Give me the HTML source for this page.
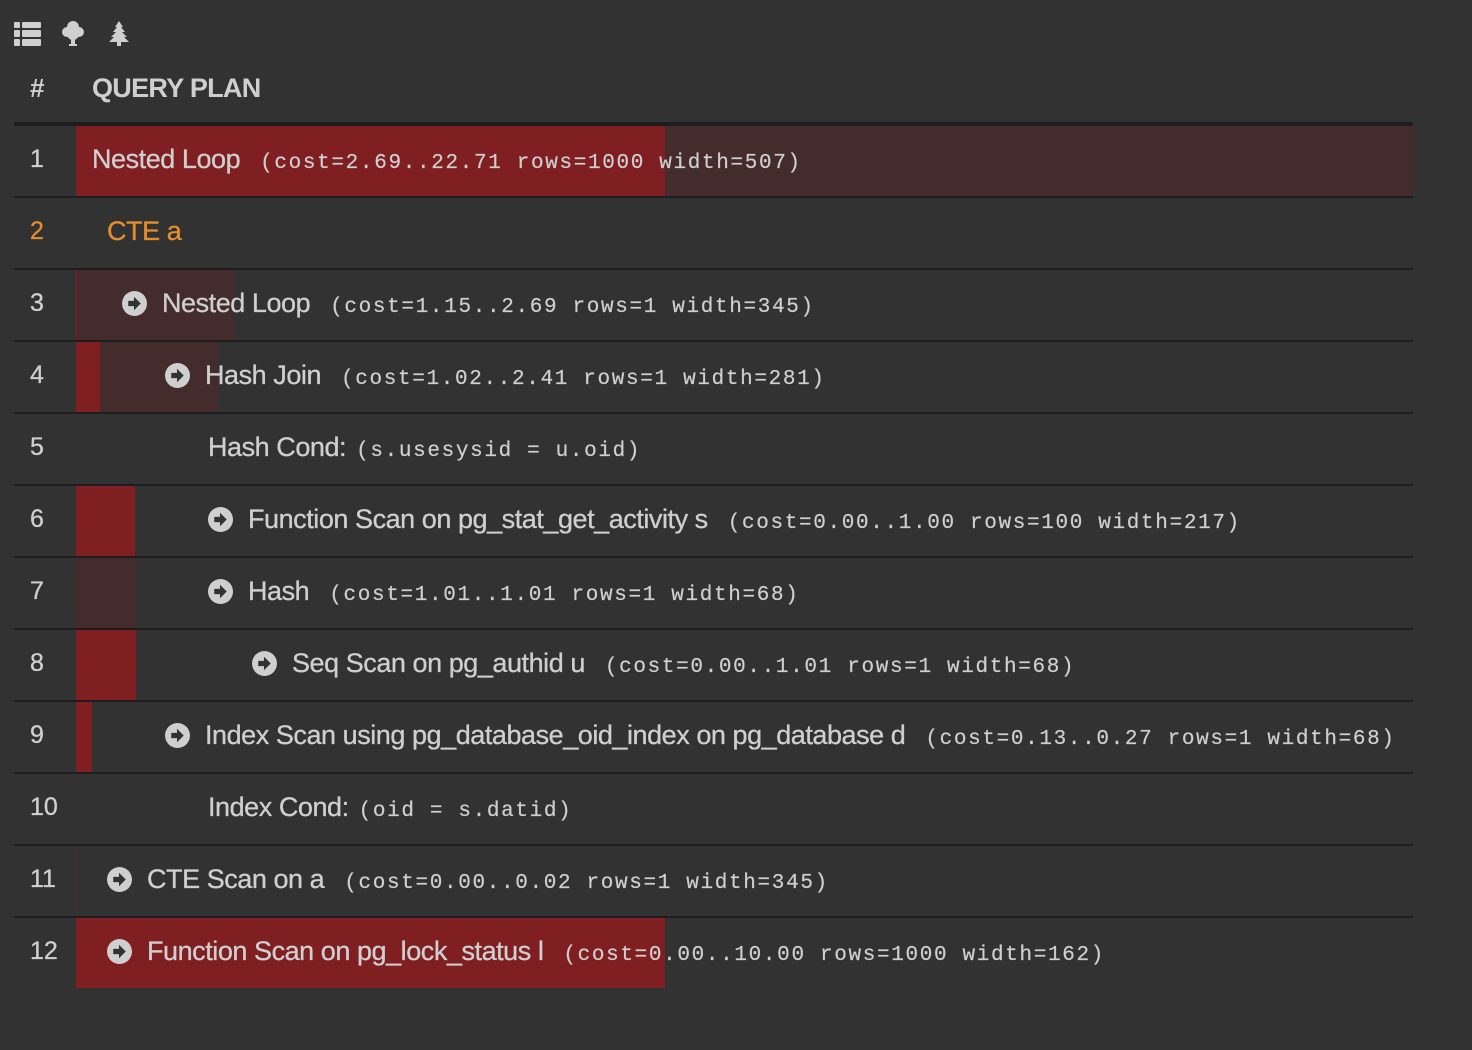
<!DOCTYPE html>
<html><head><meta charset="utf-8"><style>
*{margin:0;padding:0;box-sizing:border-box}
body{width:1472px;height:1050px;background:#323232;position:relative;overflow:hidden;font-family:"Liberation Sans",Arial,sans-serif;color:#cfcfcf}
.a{position:absolute}
.sep{position:absolute;left:14px;width:1399px;height:2px;background:#1e1e20}
.bar{position:absolute;height:70px}
.r{background:#7f1f22}
.b{background:#442b2c}
.num{position:absolute;left:30px;font-size:25px;line-height:70px;-webkit-text-stroke:0.3px #cfcfcf}
.ln{position:absolute;height:70px;display:flex;align-items:center;white-space:nowrap}
.in{display:flex;align-items:baseline}
.nm{font-size:27px;letter-spacing:-0.45px;-webkit-text-stroke:0.3px currentColor}
.mono{font-family:"Liberation Mono",monospace;font-size:21px;letter-spacing:1.65px;margin-left:20px;-webkit-text-stroke:0.2px #cfcfcf}
.ic{width:25px;height:25px;margin-right:15px;flex:none}
</style></head><body>
<svg class="a" style="left:14px;top:22px" width="27" height="24" viewBox="0 0 27 24" fill="#cfcfcf"><rect x="0" y="0" width="6" height="6" rx="1"/><rect x="8" y="0" width="19" height="6" rx="1"/><rect x="0" y="8" width="6" height="7" rx="1"/><rect x="8" y="8" width="19" height="7" rx="1"/><rect x="0" y="17" width="6" height="7" rx="1"/><rect x="8" y="17" width="19" height="7" rx="1"/></svg>
<svg class="a" style="left:62px;top:21px" width="22" height="26" viewBox="0 0 22 26" fill="#cfcfcf"><circle cx="11" cy="6" r="6"/><circle cx="5" cy="11" r="5"/><circle cx="17" cy="11" r="5"/><circle cx="11" cy="13" r="6"/><rect x="9" y="14" width="4" height="11"/><rect x="7" y="23" width="8" height="2"/></svg>
<svg class="a" style="left:108px;top:21px" width="22" height="26" viewBox="0 0 22 26" fill="#cfcfcf"><path d="M11 0L15 6H13L17 11H14L19 16H16L21 21H1L6 16H3L8 11H5L9 6H7Z"/><rect x="9" y="20" width="4" height="5"/></svg>
<div class="a" style="left:30px;top:73px;font-size:26px;font-weight:bold">#</div>
<div class="a" style="left:92px;top:73px;font-size:27px;font-weight:bold;letter-spacing:-0.7px">QUERY PLAN</div>
<div class="a" style="left:14px;top:122px;width:1399px;height:4px;background:#1e1e20"></div>

<div class="bar b" style="left:76px;top:126px;width:1337px"></div>
<div class="bar r" style="left:76px;top:126px;width:589px"></div>
<div class="bar b" style="left:76px;top:270px;width:158px"></div>
<div class="bar r" style="left:76px;top:270px;width:1px"></div>
<div class="bar b" style="left:76px;top:342px;width:142px"></div>
<div class="bar r" style="left:76px;top:342px;width:24px"></div>
<div class="bar r" style="left:76px;top:486px;width:59px"></div>
<div class="bar b" style="left:76px;top:558px;width:60px"></div>
<div class="bar r" style="left:76px;top:630px;width:60px"></div>
<div class="bar r" style="left:76px;top:702px;width:16px"></div>
<div class="bar" style="left:76px;top:846px;width:1px;background:#4a2a2c"></div>
<div class="bar r" style="left:76px;top:918px;width:589px"></div>

<div class="sep" style="top:196px"></div><div class="sep" style="top:268px"></div><div class="sep" style="top:340px"></div><div class="sep" style="top:412px"></div><div class="sep" style="top:484px"></div><div class="sep" style="top:556px"></div><div class="sep" style="top:628px"></div><div class="sep" style="top:700px"></div><div class="sep" style="top:772px"></div><div class="sep" style="top:844px"></div><div class="sep" style="top:916px"></div>

<svg width="0" height="0" style="position:absolute"><defs><symbol id="ic" viewBox="0 0 24 24"><circle cx="12" cy="12" r="12" fill="#cfcfcf"/><path d="M6 9.5H11.5V5.5L18 12L11.5 18.5V14.5H6Z" fill="#323232"/></symbol></defs></svg>

<div class="num" style="top:124px">1</div>
<div class="ln" style="left:92px;top:124px"><div class="in"><span class="nm">Nested Loop</span><span class="mono">(cost=2.69..22.71 rows=1000 width=507)</span></div></div>
<div class="num" style="top:196px;color:#e48d2c;-webkit-text-stroke:0.3px #e48d2c">2</div>
<div class="ln" style="left:107px;top:196px;color:#e48d2c"><span class="nm">CTE a</span></div>
<div class="num" style="top:268px">3</div>
<div class="ln" style="left:122px;top:268px"><svg class="ic"><use href="#ic"/></svg><div class="in"><span class="nm">Nested Loop</span><span class="mono">(cost=1.15..2.69 rows=1 width=345)</span></div></div>
<div class="num" style="top:340px">4</div>
<div class="ln" style="left:165px;top:340px"><svg class="ic"><use href="#ic"/></svg><div class="in"><span class="nm">Hash Join</span><span class="mono">(cost=1.02..2.41 rows=1 width=281)</span></div></div>
<div class="num" style="top:412px">5</div>
<div class="ln" style="left:208px;top:412px"><div class="in"><span class="nm">Hash Cond:</span><span class="mono" style="margin-left:10px">(s.usesysid = u.oid)</span></div></div>
<div class="num" style="top:484px">6</div>
<div class="ln" style="left:208px;top:484px"><svg class="ic"><use href="#ic"/></svg><div class="in"><span class="nm">Function Scan on pg_stat_get_activity s</span><span class="mono">(cost=0.00..1.00 rows=100 width=217)</span></div></div>
<div class="num" style="top:556px">7</div>
<div class="ln" style="left:208px;top:556px"><svg class="ic"><use href="#ic"/></svg><div class="in"><span class="nm">Hash</span><span class="mono">(cost=1.01..1.01 rows=1 width=68)</span></div></div>
<div class="num" style="top:628px">8</div>
<div class="ln" style="left:252px;top:628px"><svg class="ic"><use href="#ic"/></svg><div class="in"><span class="nm">Seq Scan on pg_authid u</span><span class="mono">(cost=0.00..1.01 rows=1 width=68)</span></div></div>
<div class="num" style="top:700px">9</div>
<div class="ln" style="left:165px;top:700px"><svg class="ic"><use href="#ic"/></svg><div class="in"><span class="nm">Index Scan using pg_database_oid_index on pg_database d</span><span class="mono">(cost=0.13..0.27 rows=1 width=68)</span></div></div>
<div class="num" style="top:772px">10</div>
<div class="ln" style="left:208px;top:772px"><div class="in"><span class="nm">Index Cond:</span><span class="mono" style="margin-left:10px">(oid = s.datid)</span></div></div>
<div class="num" style="top:844px">11</div>
<div class="ln" style="left:107px;top:844px"><svg class="ic"><use href="#ic"/></svg><div class="in"><span class="nm">CTE Scan on a</span><span class="mono">(cost=0.00..0.02 rows=1 width=345)</span></div></div>
<div class="num" style="top:916px">12</div>
<div class="ln" style="left:107px;top:916px"><svg class="ic"><use href="#ic"/></svg><div class="in"><span class="nm">Function Scan on pg_lock_status l</span><span class="mono">(cost=0.00..10.00 rows=1000 width=162)</span></div></div>
</body></html>
